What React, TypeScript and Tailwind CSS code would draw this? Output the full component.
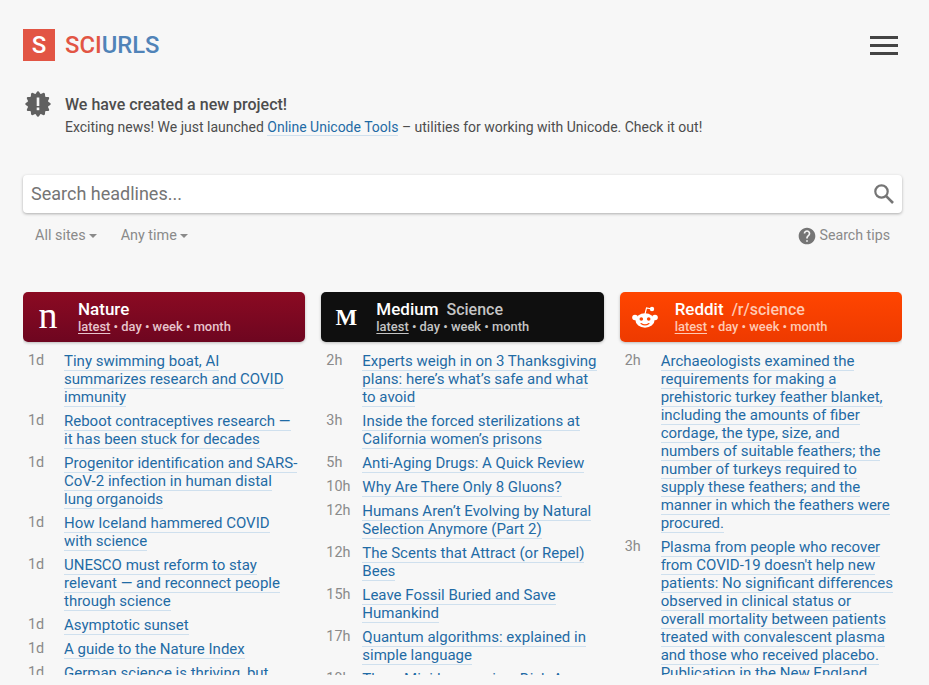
import React from "react";

type Item = [string, string];

const nature: Item[] = [
  ["1d", "Tiny swimming boat, AI summarizes research and COVID immunity"],
  ["1d", "Reboot contraceptives research — it has been stuck for decades"],
  ["1d", "Progenitor identification and SARS-CoV-2 infection in human distal lung organoids"],
  ["1d", "How Iceland hammered COVID with science"],
  ["1d", "UNESCO must reform to stay relevant — and reconnect people through science"],
  ["1d", "Asymptotic sunset"],
  ["1d", "A guide to the Nature Index"],
  ["1d", "German science is thriving, but faces challenges"],
];

const medium: Item[] = [
  ["2h", "Experts weigh in on 3 Thanksgiving plans: here’s what’s safe and what to avoid"],
  ["3h", "Inside the forced sterilizations at California women’s prisons"],
  ["5h", "Anti-Aging Drugs: A Quick Review"],
  ["10h", "Why Are There Only 8 Gluons?"],
  ["12h", "Humans Aren’t Evolving by Natural Selection Anymore (Part 2)"],
  ["12h", "The Scents that Attract (or Repel) Bees"],
  ["15h", "Leave Fossil Buried and Save Humankind"],
  ["17h", "Quantum algorithms: explained in simple language"],
  ["19h", "Three Mini-lessons in a Dish A"],
];

const reddit: Item[] = [
  ["2h", "Archaeologists examined the requirements for making a prehistoric turkey feather blanket, including the amounts of fiber cordage, the type, size, and numbers of suitable feathers; the number of turkeys required to supply these feathers; and the manner in which the feathers were procured."],
  ["3h", "Plasma from people who recover from COVID-19 doesn't help new patients: No significant differences observed in clinical status or overall mortality between patients treated with convalescent plasma and those who received placebo. Publication in the New England Journal of Medicine."],
];

function badgePath() {
  const pts: string[] = [];
  for (let i = 0; i < 96; i++) {
    const a = (i / 96) * Math.PI * 2;
    const r = 11.6 + 1.2 * Math.cos(a * 12);
    pts.push(`${(13 + r * Math.cos(a)).toFixed(2)},${(13 + r * Math.sin(a)).toFixed(2)}`);
  }
  return pts.join(" ");
}

function Column({
  logo,
  name,
  sub,
  headerClass,
  subClass,
  items,
}: {
  logo: React.ReactNode;
  name: string;
  sub?: string;
  headerClass: string;
  subClass: string;
  items: Item[];
}) {
  return (
    <section className="min-w-0">
      <header className={`flex h-[50px] items-center rounded-[5px] shadow-[0_1px_3px_rgba(0,0,0,0.25)] ${headerClass}`}>
        <div className="flex w-[50px] shrink-0 items-center justify-center">{logo}</div>
        <div className="ml-[5px] min-w-0 pt-[1px]">
          <div className="flex h-[19px] items-center text-[17px] font-medium leading-[19px] text-white">
            {name}
            {sub && <span className={`ml-2 text-[16px] ${subClass}`}>{sub}</span>}
          </div>
          <div className={`text-[12.9px] font-medium leading-[16px] ${subClass}`}>
            <span className="underline underline-offset-2">latest</span> • day • week • month
          </div>
        </div>
      </header>
      <ul className="mt-[10px] flex flex-col gap-[6px]">
        {items.map(([t, title], i) => (
          <li key={i} className="flex text-[15px] leading-[18px]">
            <span className="w-[41px] shrink-0 pl-[5px] text-[14.4px] text-[#8a8a8a]">{t}</span>
            <a className="min-w-0 flex-1 pr-[4px] text-[#1f6ba5]">
              <span className="border-b border-[#cfe0ee]">{title}</span>
            </a>
          </li>
        ))}
      </ul>
    </section>
  );
}

export default function App() {
  return (
    <div className="h-[685px] w-[929px] overflow-hidden bg-[#f7f7f7] pl-[23px] pr-[27px] pt-[29px] font-['Roboto',sans-serif]">
      <header className="flex h-[32px] items-center justify-between">
        <div className="flex items-center">
          <div className="flex h-[32px] w-[32px] items-center justify-center bg-[#e25544] text-[24px] font-medium leading-none text-white">S</div>
          <div className="ml-[10px] pt-[2px] text-[23.8px] font-medium leading-none">
            <span className="text-[#e25544]">SCI</span>
            <span className="text-[#5083b8]">URLS</span>
          </div>
        </div>
        <div className="mr-[4px] flex w-[28px] flex-col gap-[5px]">
          <div className="h-[3px] bg-[#444]" />
          <div className="h-[3px] bg-[#444]" />
          <div className="h-[3px] bg-[#444]" />
        </div>
      </header>

      <div className="mt-[34px] flex h-[42px] items-start">
        <svg viewBox="0 0 26 26" className="ml-[2px] mt-[-4px] h-[26px] w-[26px] shrink-0">
          <polygon points={badgePath()} fill="#606060" />
          <rect x="11.7" y="6.5" width="2.6" height="8.5" fill="#f7f7f7" />
          <rect x="11.7" y="16.5" width="2.6" height="2.7" fill="#f7f7f7" />
        </svg>
        <div className="ml-[14px] text-[#4d4d4d]">
          <div className="text-[16px] font-medium leading-[20px]">We have created a new project!</div>
          <div className="mt-[3px] text-[14px] leading-[18px]">
            Exciting news! We just launched <span className="border-b border-[#cfe0ee] text-[#1f6ba5]">Online Unicode Tools</span> – utilities for working with Unicode. Check it out!
          </div>
        </div>
      </div>

      <div className="mt-[38px] flex h-[38px] items-center rounded-[4px] bg-white pl-[8px] pr-[6px] shadow-[0_1px_3px_rgba(0,0,0,0.3)]">
        <span className="flex-1 pb-[1px] text-[18px] text-[#757575]">Search headlines...</span>
        <svg viewBox="0 0 24 24" className="h-[24px] w-[24px]" fill="none" stroke="#757575" strokeWidth="2.2">
          <circle cx="9.5" cy="9.5" r="6.2" />
          <path d="M14.2 14.2L21 21" strokeWidth="2.6" />
        </svg>
      </div>

      <div className="mt-[13px] flex h-[20px] items-center justify-between pl-[12px] pr-[12px] text-[14.4px] text-[#8a8a8a]">
        <div className="flex items-center gap-[24px]">
          <span className="flex items-center">
            All sites<span className="ml-[3px] h-0 w-0 border-x-[4px] border-t-[4px] border-x-transparent border-t-[#8a8a8a]" />
          </span>
          <span className="flex items-center">
            Any time<span className="ml-[3px] h-0 w-0 border-x-[4px] border-t-[4px] border-x-transparent border-t-[#8a8a8a]" />
          </span>
        </div>
        <span className="flex items-center text-[14.2px]">
          <svg viewBox="0 0 24 24" className="mr-[3px] h-[20px] w-[20px]" fill="#757575">
            <path d="M12 2C6.48 2 2 6.48 2 12s4.48 10 10 10 10-4.48 10-10S17.52 2 12 2zm1 17h-2v-2h2v2zm2.07-7.75l-.9.92C13.45 12.9 13 13.5 13 15h-2v-.5c0-1.1.45-2.1 1.17-2.83l1.24-1.26c.37-.36.59-.86.59-1.41 0-1.1-.9-2-2-2s-2 .9-2 2H8c0-2.21 1.79-4 4-4s4 1.79 4 4c0 .88-.36 1.68-.93 2.25z" />
          </svg>
          Search tips
        </span>
      </div>

      <div className="mt-[46px] grid h-[383px] grid-cols-3 gap-x-[16px] overflow-hidden">
        <Column
          name="Nature"
          headerClass="bg-gradient-to-b from-[#8b0a22] to-[#6e0620]"
          subClass="text-[#e8c4cc]"
          logo={<span className="relative top-[-2px] font-['Liberation_Serif',serif] text-[38px] leading-none text-white">n</span>}
          items={nature}
        />
        <Column
          name="Medium"
          sub="Science"
          headerClass="bg-[#0f0f0f]"
          subClass="text-[#c4c4c4]"
          logo={<span className="font-['Liberation_Serif',serif] text-[23px] font-bold leading-none text-white">M</span>}
          items={medium}
        />
        <Column
          name="Reddit"
          sub="/r/science"
          headerClass="bg-gradient-to-b from-[#ff4500] to-[#ee3a00]"
          subClass="text-[#ffc9b3]"
          logo={
            <svg viewBox="0 0 26 22" className="h-[22px] w-[26px]" fill="white">
              <ellipse cx="13" cy="14.5" rx="9.5" ry="7.2" />
              <circle cx="3" cy="11.5" r="2.8" />
              <circle cx="23" cy="11.5" r="2.8" />
              <circle cx="20" cy="3" r="2.2" />
              <path d="M13 8l1.5-6L20 3" fill="none" stroke="white" strokeWidth="1.1" />
              <circle cx="9.3" cy="13" r="1.8" fill="#ff4500" />
              <circle cx="16.7" cy="13" r="1.8" fill="#ff4500" />
              <path d="M9 17.5c2.3 1.6 5.7 1.6 8 0" fill="none" stroke="#ff4500" strokeWidth="1.1" strokeLinecap="round" />
            </svg>
          }
          items={reddit}
        />
      </div>
    </div>
  );
}
